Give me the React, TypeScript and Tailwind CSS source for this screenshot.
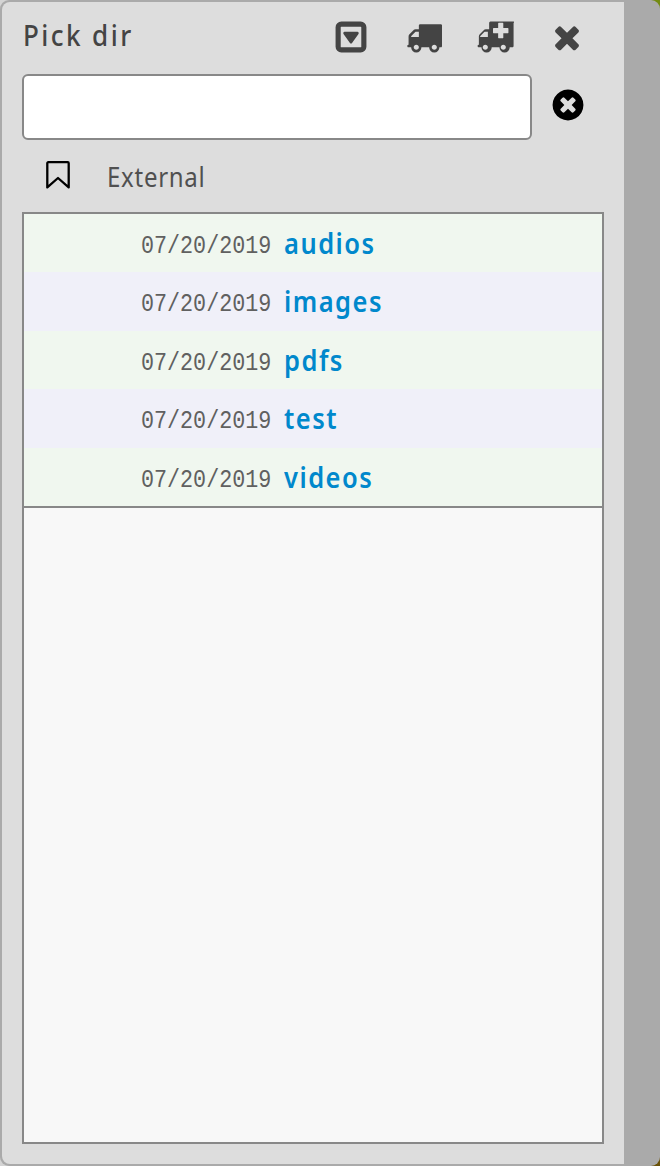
import React from "react";

const TRUCK =
  "M640 1408q0-52-38-90t-90-38-90 38-38 90 38 90 90 38 90-38 38-90zm-384-512h384v-256h-158q-13 0-22 9l-195 195q-9 9-9 22v30zm1280 512q0-52-38-90t-90-38-90 38-38 90 38 90 90 38 90-38 38-90zm256-1088v1024q0 15-4 26.5t-13.5 18.5-16.5 11.5-23.5 6-22.5 2-25.5 0-22.5-.5q0 106-75 181t-181 75-181-75-75-181h-384q0 106-75 181t-181 75-181-75-75-181h-64q-3 0-22.5.5t-25.5 0-22.5-2-23.5-6-16.5-11.5-13.5-18.5-4-26.5q0-26 19-45t45-19v-320q0-8-.5-35t0-38 2.5-34.5 6.5-37 14-30.5 22.5-30l198-198q19-19 50.5-32t58.5-13h160v-192q0-26 19-45t45-19h1024q26 0 45 19t19 45z";
const AMBULANCE =
  "M640 1408q0-52-38-90t-90-38-90 38-38 90 38 90 90 38 90-38 38-90zm-384-512h384v-256h-158q-14 0-22 9l-195 195q-9 8-9 22v30zm1280 512q0-52-38-90t-90-38-90 38-38 90 38 90 90 38 90-38 38-90zm128-736v-192q0-14-9-23t-23-9h-224v-224q0-14-9-23t-23-9h-192q-14 0-23 9t-9 23v224h-224q-14 0-23 9t-9 23v192q0 14 9 23t23 9h224v224q0 14 9 23t23 9h192q14 0 23-9t9-23v-224h224q14 0 23-9t9-23zm256-480v1152q0 26-19 45t-45 19h-128q0 106-75 181t-181 75-181-75-75-181h-384q0 106-75 181t-181 75-181-75-75-181h-128q-26 0-45-19t-19-45 19-45 45-19v-416q0-26 13-58t32-51l198-198q19-19 51-32t58-13h160v-320q0-26 19-45t45-19h1152q26 0 45 19t19 45z";
const TIMES =
  "M1490 1322q0 40-28 68l-136 136q-28 28-68 28t-68-28l-294-294-294 294q-28 28-68 28t-68-28l-136-136q-28-28-28-68t28-68l294-294-294-294q-28-28-28-68t28-68l136-136q28-28 68-28t68 28l294 294 294-294q28-28 68-28t68 28l136 136q28 28 28 68t-28 68l-294 294 294 294q28 28 28 68z";
const TIMES_CIRCLE =
  "M1277 1122q0-26-19-45l-181-181 181-181q19-19 19-45 0-27-19-46l-90-90q-19-19-46-19-26 0-45 19l-181 181-181-181q-19-19-45-19-27 0-46 19l-90 90q-19 19-19 46 0 26 19 45l181 181-181 181q-19 19-19 45 0 27 19 46l90 90q19 19 46 19 26 0 45-19l181-181 181 181q19 19 45 19 27 0 46-19l90-90q19-19 19-46zm387-226q0 209-103 385.5t-279.5 279.5-385.5 103-385.5-103-279.5-279.5-103-385.5 103-385.5 279.5-279.5 385.5-103 385.5 103 279.5 279.5 103 385.5z";

const rows = [
  { name: "audios", date: "07/20/2019", color: "bg-[#f0f7ef]" },
  { name: "images", date: "07/20/2019", color: "bg-[#f0f0f9]" },
  { name: "pdfs", date: "07/20/2019", color: "bg-[#f0f7ef]" },
  { name: "test", date: "07/20/2019", color: "bg-[#f0f0f9]" },
  { name: "videos", date: "07/20/2019", color: "bg-[#f0f7ef]" },
];

function Glyph({ d, className, viewBox = "0 0 1792 1792" }: { d: string; className: string; viewBox?: string }) {
  return (
    <svg viewBox={viewBox} className={className} fill="currentColor">
      <path d={d} />
    </svg>
  );
}

export default function App() {
  return (
    <div className="h-[1166px] w-[660px] overflow-hidden bg-[linear-gradient(90deg,#d4d4d4_50%,transparent_50%),linear-gradient(180deg,#748b12_50%,#6b5208_50%)] font-['Noto_Sans',sans-serif]">
      <div className="h-full w-full overflow-hidden rounded-[9px] bg-[#aaaaaa] py-[2px] pl-[2px]">
        <div className="flex h-[1162px] w-[622px] flex-col rounded-l-[8px] bg-[#dddddd] px-[20px] pb-[20px]">
          <header className="flex h-[72px] shrink-0 items-start text-[#444444]">
            <h1 className="ml-px mt-[13px] w-[310.4px] origin-left scale-x-[0.93] whitespace-nowrap text-[28px] font-medium leading-[40px] tracking-[2.6px]">
              Pick dir
            </h1>
            <button className="mt-[17px] size-[36px] shrink-0" aria-label="Menu">
              <svg viewBox="0 0 1792 1792" className="size-[36px]" fill="currentColor">
                <path
                  fillRule="evenodd"
                  d="M416 128h960a288 288 0 0 1 288 288v960a288 288 0 0 1-288 288H416a288 288 0 0 1-288-288V416a288 288 0 0 1 288-288zM416 384a32 32 0 0 0-32 32v960a32 32 0 0 0 32 32h960a32 32 0 0 0 32-32V416a32 32 0 0 0-32-32z"
                />
                <path d="M1273 675q18 35-5 66l-320 448q-19 27-52 27t-52-27L524 741q-23-31-5-66 17-35 57-35h640q40 0 57 35z" />
              </svg>
            </button>
            <button className="ml-[36.6px] mt-[17px] shrink-0" aria-label="Move">
              <Glyph d={TRUCK} className="size-[36px]" />
            </button>
            <button className="ml-[33.4px] mt-[17px] shrink-0" aria-label="Copy">
              <Glyph d={AMBULANCE} viewBox="0 0 1920 1792" className="h-[36px] w-[38.6px]" />
            </button>
            <button className="ml-[34.6px] mt-[17px] shrink-0" aria-label="Close">
              <Glyph d={TIMES} className="size-[36px]" />
            </button>
          </header>

          <div className="flex h-[66px] shrink-0 items-center">
            <input
              aria-label="Path"
              className="h-[66px] w-[510px] rounded-[6px] border-2 border-[#888888] bg-white px-3 text-[26px] outline-none"
            />
            <button className="ml-[17.6px] mt-[-4px] text-black" aria-label="Clear">
              <Glyph d={TIMES_CIRCLE} className="size-[36px]" />
            </button>
          </div>

          <div className="flex h-[72px] shrink-0 items-start">
            <svg viewBox="0 0 24 28" className="ml-[24px] mt-[21px] h-[28px] w-[24px]" fill="none" stroke="#000" strokeWidth="2.3" strokeLinejoin="round">
              <path d="M2.3 1.2H21.7Q22.7 1.2 22.7 2.2V26.4L12 17L1.3 26.4V2.2Q1.3 1.2 2.3 1.2Z" />
            </svg>
            <span className="ml-[37px] mt-[17px] origin-left scale-x-[0.89] whitespace-nowrap text-[27px] leading-[40px] tracking-[0.8px] text-[#505050]">
              External
            </span>
          </div>

          <div className="min-h-0 flex-1 border-2 border-[#888888] bg-[#f8f8f8]">
            <ul className="border-b-2 border-[#888888]">
              {rows.map((row) => (
                <li key={row.name} className={`flex h-[58.4px] items-start pl-[117px] ${row.color}`}>
                  <span className="mt-[12px] w-[142.6px] origin-left scale-x-[0.835] whitespace-nowrap font-['Liberation_Mono',monospace] text-[26px] leading-[40px] text-[#606060]">
                    {row.date}
                  </span>
                  <span className="mt-[9px] origin-left scale-x-[0.91] whitespace-nowrap text-[28px] font-semibold leading-[40px] tracking-[1.65px] text-[#0088cc]">
                    {row.name}
                  </span>
                </li>
              ))}
            </ul>
          </div>
        </div>
      </div>
    </div>
  );
}
